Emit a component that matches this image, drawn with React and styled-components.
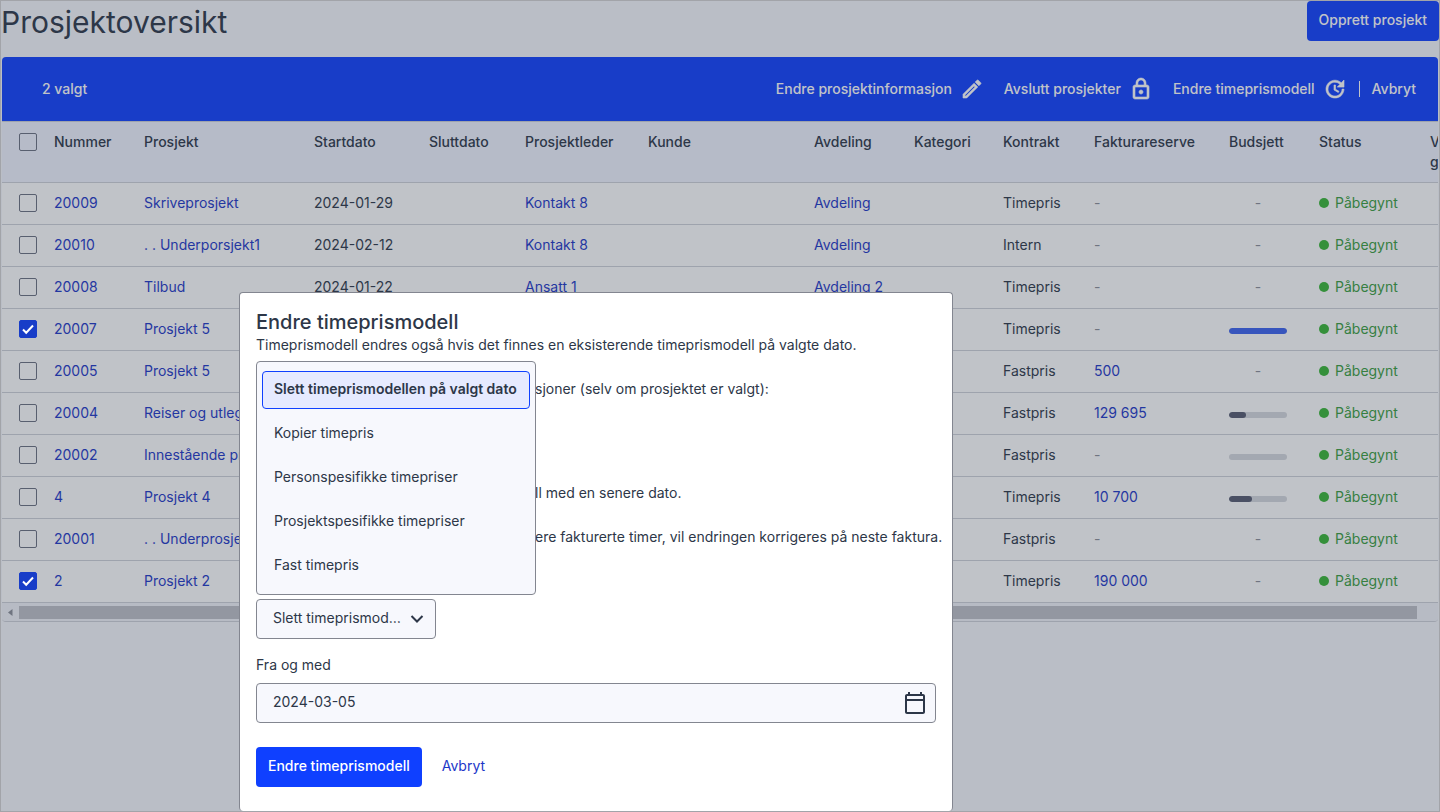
import React, { useState } from "react"
import styled, { createGlobalStyle, ThemeProvider } from "styled-components"
import { MdOutlineModeEdit, MdLockOutline, MdUpdate, MdOutlineCalendarToday } from "react-icons/md"

const theme = {
  ink: "#2d3748",
  blue: "#0f40ff",
  link: "#1d37c8",
  green: "#38b635",
  greenText: "#3a9e40",
  line: "#cfd1d8",
  edge: "#838690",
  surface: "#f7f8fd",
  head: "#f1f4ff",
  muted: "#8b8f99",
}

const GlobalStyle = createGlobalStyle`
  * {
    box-sizing: border-box;
  }
  body {
    margin: 0;
    font-family: Inter, "Liberation Sans", sans-serif;
    font-size: 14px;
    line-height: 20px;
    color: ${props => props.theme.ink};
  }
  button, input, select {
    font: inherit;
    color: inherit;
  }
`

const Frame = styled.div`
  position: relative;
  min-height: 100vh;
  overflow: hidden;
  background: ${props => props.theme.surface};
  border: 1px solid #a2a4a9;
`
const Header = styled.header`
  display: flex;
  justify-content: space-between;
  align-items: flex-start;
  height: 56px;
`
const Title = styled.h1`
  margin: 0;
  font-size: 30px;
  line-height: 42px;
  font-weight: 400;
`
const Button = styled.button`
  height: 40px;
  padding: 0 12px 2px;
  border: none;
  border-radius: 4px;
  background: ${props => props.theme.blue};
  color: #fff;
  font-weight: 500;
  cursor: pointer;
`
const Card = styled.section`
  margin: 0 1px;
  border-radius: 4px;
  overflow: hidden;
  border-bottom: 1px solid ${props => props.theme.line};
`
const Toolbar = styled.div`
  display: flex;
  align-items: center;
  justify-content: space-between;
  height: 64px;
  padding: 0 22px 0 40px;
  background: ${props => props.theme.blue};
  color: #fff;
  font-weight: 500;
`
const Actions = styled.div`
  display: flex;
  align-items: center;
  gap: 20px;
`
const Action = styled.button`
  display: flex;
  align-items: center;
  gap: 8px;
  padding: 0;
  border: none;
  background: none;
  white-space: nowrap;
  cursor: pointer;

  path:not([fill="none"]) {
    stroke: currentColor;
    stroke-width: 0.6px;
  }
  svg {
    stroke: none;
  }
`
const CancelAction = styled(Action)`
  margin-left: -8px;
  gap: 12px;
  &::before {
    content: "";
    width: 1px;
    height: 16px;
    background: #fff;
  }
`
const Table = styled.table`
  width: 100%;
  table-layout: fixed;
  border-collapse: separate;
  border-spacing: 0;
  background: #fff;

  th, td {
    padding: 0;
    text-align: left;
    white-space: nowrap;
    border-bottom: 1px solid ${props => props.theme.line};
  }
  th {
    height: 62px;
    padding-top: 10px;
    vertical-align: top;
    font-weight: 500;
    background: ${props => props.theme.head};
    border-top: 1px solid ${props => props.theme.line};
  }
  td {
    height: 42px;
    padding-bottom: 2px;
  }
  th:first-child, td:first-child {
    padding-left: 16px;
  }
`
const Link = styled.a`
  color: ${props => props.theme.link};
  text-decoration: none;
`
const Muted = styled.span`
  display: block;
  width: 58px;
  text-align: ${props => (props.$center ? "center" : "left")};
  color: ${props => props.theme.muted};
`
const CheckBoxWrap = styled.label`
  display: grid;
  width: 20px;
  height: 20px;

  input, svg {
    grid-area: 1 / 1;
    width: 20px;
    height: 20px;
    margin: 0;
  }
  input {
    appearance: none;
    margin: 1px;
    width: 18px;
    height: 18px;
    border: 1px solid #6b7080;
    border-radius: 2px;
  }
  input:checked {
    background: ${props => props.theme.blue};
    border-color: ${props => props.theme.blue};
  }
  svg {
    pointer-events: none;
    z-index: 1;
  }
`
const Meter = styled.div`
  width: 58px;
  height: 6px;
  margin-top: 4px;
  border-radius: 3px;
  overflow: hidden;
  background: #d6d8de;
`
const MeterFill = styled.div`
  height: 6px;
  border-radius: 3px;
  background: ${props => (props.$full ? "#3c62f0" : "#565b70")};
`
const Status = styled.span`
  display: flex;
  align-items: center;
  gap: 6px;
  color: ${props => props.theme.greenText};

  &::before {
    content: "";
    width: 10px;
    height: 10px;
    border-radius: 50%;
    background: ${props => props.theme.green};
  }
`
const ScrollBar = styled.div`
  display: flex;
  align-items: center;
  height: 18px;
  padding-right: 21px;
  background: #f3f4f9;

  svg {
    width: 17px;
    height: 17px;
  }
`
const ScrollThumb = styled.div`
  flex: 1;
  height: 13px;
  background: #bfc1c8;
`
const Backdrop = styled.div`
  position: absolute;
  inset: 0;
  background: rgba(45, 55, 72, 0.3);
`
const Dialog = styled.section`
  position: absolute;
  left: 238px;
  bottom: 0;
  width: 714px;
  max-width: 100%;
  padding: 16px 16px 24px;
  background: #fff;
  border: 1px solid ${props => props.theme.edge};
  border-bottom: none;
  border-radius: 4px;
`
const DialogTitle = styled.h2`
  margin: 0;
  font-size: 20px;
  line-height: 26px;
  font-weight: 500;
`
const Text = styled.p`
  margin: 0;
`
const Notes = styled.div`
  display: flex;
  flex-direction: column;
  gap: 24px;
  padding: 24px 0 52px 279px;
  white-space: nowrap;

  p:first-child {
    margin-bottom: 60px;
  }
`
const Field = styled.div`
  display: flex;
  flex-direction: column;
  align-items: ${props => (props.$fit ? "flex-start" : "stretch")};
  position: relative;
  gap: 8px;
  margin-bottom: 16px;
`
const ControlBox = styled.div`
  display: flex;
  align-items: center;
  height: 40px;
  padding: 0 8px 0 16px;
  border: 1px solid ${props => props.theme.edge};
  border-radius: 4px;
  background: ${props => props.theme.surface};
`
const SelectBox = styled(ControlBox)`
  width: 180px;
`
const Select = styled.select`
  flex: 1;
  min-width: 0;
  padding: 0 0 2px;
  appearance: none;
  border: none;
  outline: none;
  background: none;
  overflow: hidden;
  white-space: nowrap;
  text-overflow: ellipsis;
`
const DateInput = styled.input`
  flex: 1;
  min-width: 0;
  padding: 0 0 2px;
  border: none;
  outline: none;
  background: none;
`
const IconButton = styled.button`
  display: flex;
  padding: 0;
  border: none;
  background: none;
`
const OptionList = styled.ul`
  position: absolute;
  left: 0;
  bottom: 44px;
  width: 280px;
  margin: 0;
  padding: 9px 5px;
  list-style: none;
  display: flex;
  flex-direction: column;
  gap: 6px;
  background: ${props => props.theme.surface};
  border: 1px solid ${props => props.theme.edge};
  border-radius: 4px;
`
const Option = styled.li`
  height: 38px;
  padding: 7px 11px;
  border: 1px solid ${props => (props.$active ? props.theme.blue : "transparent")};
  border-radius: 4px;
  background: ${props => (props.$active ? "#e6eaff" : "none")};
  font-weight: ${props => (props.$active ? 600 : 400)};
  white-space: nowrap;
  cursor: pointer;
`
const DialogActions = styled.div`
  display: flex;
  align-items: center;
  gap: 20px;
  margin-top: 24px;
`
const TextButton = styled(Action)`
  padding-bottom: 2px;
  color: ${props => props.theme.link};
`

const columns = [
  ["", 52],
  ["Nummer", 90],
  ["Prosjekt", 170],
  ["Startdato", 115],
  ["Sluttdato", 96],
  ["Prosjektleder", 123],
  ["Kunde", 166],
  ["Avdeling", 100],
  ["Kategori", 89],
  ["Kontrakt", 91],
  ["Fakturareserve", 135],
  ["Budsjett", 90],
  ["Status", 111],
]

const projects = [
  { id: "20009", name: "Skriveprosjekt", start: "2024-01-29", lead: "Kontakt 8", dept: "Avdeling", contract: "Timepris" },
  { id: "20010", name: ". . Underporsjekt1", start: "2024-02-12", lead: "Kontakt 8", dept: "Avdeling", contract: "Intern" },
  { id: "20008", name: "Tilbud", start: "2024-01-22", lead: "Ansatt 1", dept: "Avdeling 2", contract: "Timepris" },
  { id: "20007", name: "Prosjekt 5", contract: "Timepris", budget: 100, checked: true },
  { id: "20005", name: "Prosjekt 5", contract: "Fastpris", reserve: "500" },
  { id: "20004", name: "Reiser og utlegg", contract: "Fastpris", reserve: "129 695", budget: 29 },
  { id: "20002", name: "Innestående pr", contract: "Fastpris", budget: 0 },
  { id: "4", name: "Prosjekt 4", contract: "Timepris", reserve: "10 700", budget: 40 },
  { id: "20001", name: ". . Underprosjekt", contract: "Fastpris" },
  { id: "2", name: "Prosjekt 2", contract: "Timepris", reserve: "190 000", checked: true },
]

const options = [
  "Slett timeprismodellen på valgt dato",
  "Kopier timepris",
  "Personspesifikke timepriser",
  "Prosjektspesifikke timepriser",
  "Fast timepris",
]

const CheckBox = ({ label, defaultChecked = false }) => {
  const [checked, setChecked] = useState(defaultChecked)
  return (
    <CheckBoxWrap>
      <input type="checkbox" aria-label={label} checked={checked} onChange={() => setChecked(!checked)} />
      {checked && (
        <svg viewBox="0 0 20 20" fill="none" stroke="#fff" strokeWidth="2">
          <path d="M5 10.5l3.2 3.2L15 6.5" />
        </svg>
      )}
    </CheckBoxWrap>
  )
}

const ProjectRow = ({ project }) => (
  <tr>
    <td><CheckBox label={`Velg ${project.id}`} defaultChecked={project.checked} /></td>
    <td><Link href="#">{project.id}</Link></td>
    <td><Link href="#">{project.name}</Link></td>
    <td>{project.start}</td>
    <td></td>
    <td>{project.lead && <Link href="#">{project.lead}</Link>}</td>
    <td></td>
    <td>{project.dept && <Link href="#">{project.dept}</Link>}</td>
    <td></td>
    <td>{project.contract}</td>
    <td>{project.reserve ? <Link href="#">{project.reserve}</Link> : <Muted>-</Muted>}</td>
    <td>
      {project.budget === undefined ? <Muted $center>-</Muted> : (
        <Meter>
          <MeterFill $full={project.budget === 100} style={{ width: `${project.budget}%` }} />
        </Meter>
      )}
    </td>
    <td><Status>Påbegynt</Status></td>
    <td></td>
  </tr>
)

const App = () => {
  const [model, setModel] = useState(options[0])
  const [date, setDate] = useState("2024-03-05")

  return (
    <ThemeProvider theme={theme}>
      <GlobalStyle />
      <Frame>
        <Header>
          <Title>Prosjektoversikt</Title>
          <Button>Opprett prosjekt</Button>
        </Header>
        <Card>
          <Toolbar>
            <span>2 valgt</span>
            <Actions>
              <Action>Endre prosjektinformasjon <MdOutlineModeEdit size={24} /></Action>
              <Action>Avslutt prosjekter <MdLockOutline size={24} /></Action>
              <Action>Endre timeprismodell <MdUpdate size={24} /></Action>
              <CancelAction>Avbryt</CancelAction>
            </Actions>
          </Toolbar>
          <Table>
            <colgroup>
              {columns.map(([name, width]) => <col key={name} width={width} />)}
              <col />
            </colgroup>
            <thead>
              <tr>
                {columns.map(([name]) => (
                  <th key={name}>{name || <CheckBox label="Velg alle" />}</th>
                ))}
                <th>V<br />g</th>
              </tr>
            </thead>
            <tbody>
              {projects.map(project => <ProjectRow key={project.id} project={project} />)}
            </tbody>
          </Table>
          <ScrollBar>
            <svg viewBox="0 0 17 17"><path d="M10.500 5v7L6 8.500z" fill="#8b8f99" /></svg>
            <ScrollThumb />
          </ScrollBar>
        </Card>
        <Backdrop />
        <Dialog role="dialog" aria-labelledby="dialog-title">
          <DialogTitle id="dialog-title">Endre timeprismodell</DialogTitle>
          <Text>Timeprismodell endres også hvis det finnes en eksisterende timeprismodell på valgte dato.</Text>
          <Notes>
            <Text>sjoner (selv om prosjektet er valgt):</Text>
            <Text>ll med en senere dato.</Text>
            <Text>ere fakturerte timer, vil endringen korrigeres på neste faktura.</Text>
          </Notes>
          <Field $fit>
            <SelectBox>
              <Select aria-label="Timeprismodell" value={model} onChange={e => setModel(e.target.value)}>
                {options.map(option => <option key={option}>{option}</option>)}
              </Select>
              <svg width="20" height="20" viewBox="0 0 20 20" fill="none" stroke="#2d3748" strokeWidth="2">
                <path d="M4.500 7L10 12.500l5.500-5.500" />
              </svg>
            </SelectBox>
            <OptionList role="listbox" aria-label="Timeprismodell">
              {options.map(option => (
                <Option key={option} role="option" aria-selected={option === model} $active={option === model} onClick={() => setModel(option)}>
                  {option}
                </Option>
              ))}
            </OptionList>
          </Field>
          <Field>
            <label htmlFor="from-date">Fra og med</label>
            <ControlBox>
              <DateInput id="from-date" value={date} onChange={e => setDate(e.target.value)} />
              <IconButton aria-label="Velg dato"><MdOutlineCalendarToday size={24} /></IconButton>
            </ControlBox>
          </Field>
          <DialogActions>
            <Button>Endre timeprismodell</Button>
            <TextButton>Avbryt</TextButton>
          </DialogActions>
        </Dialog>
      </Frame>
    </ThemeProvider>
  )
}

export default App
